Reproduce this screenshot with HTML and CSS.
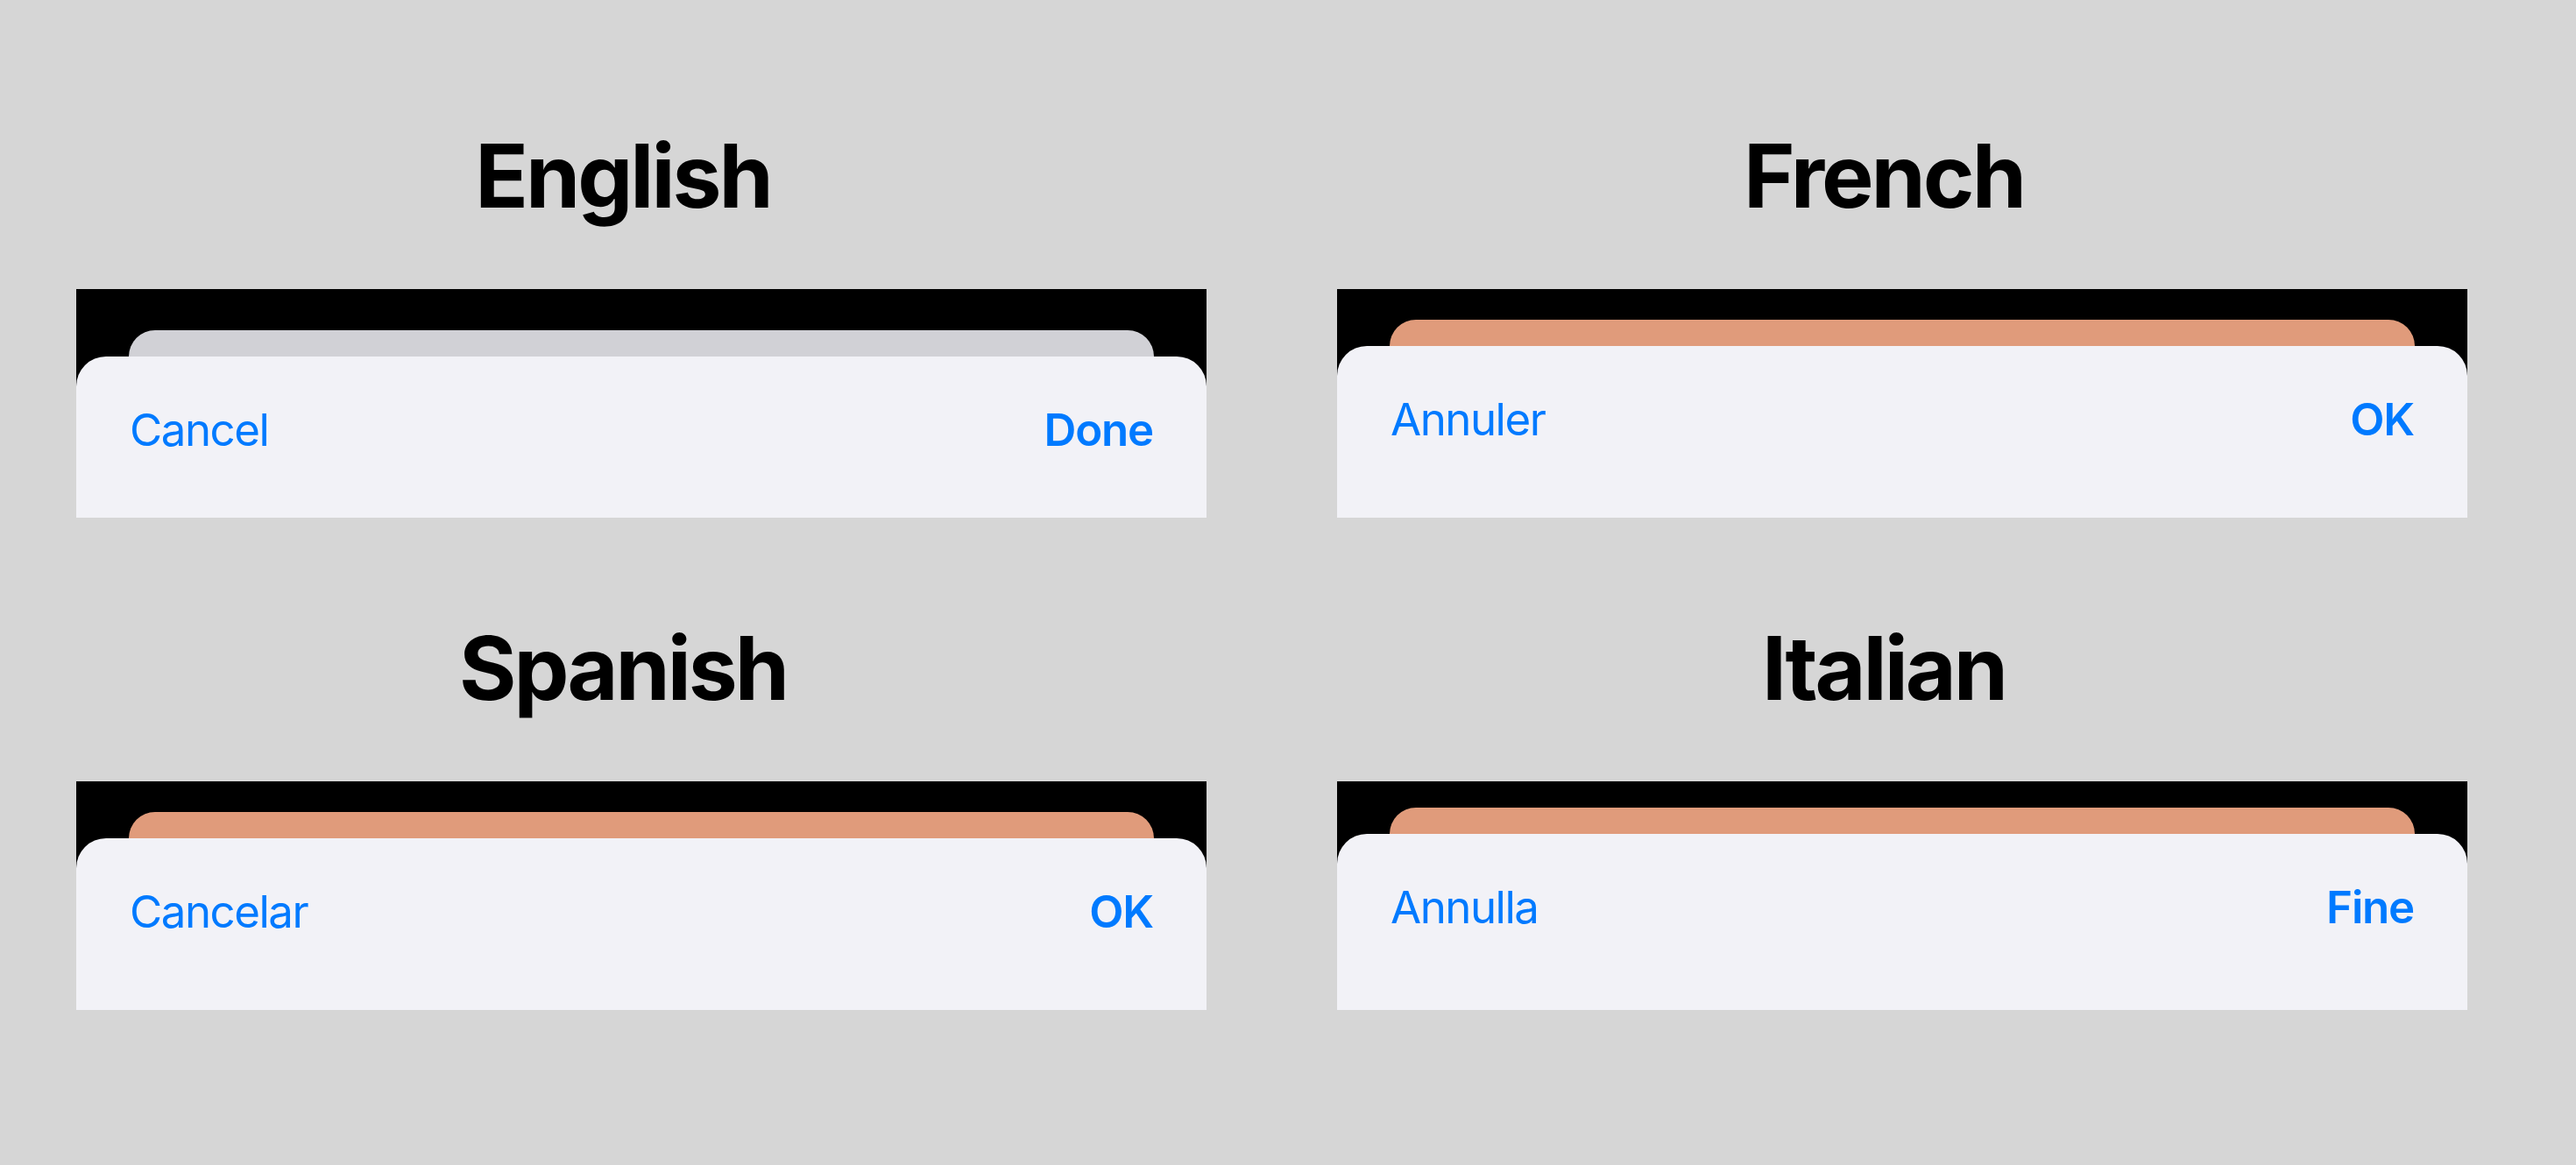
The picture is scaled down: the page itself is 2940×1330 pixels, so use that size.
FILE: index.html
```html
<!DOCTYPE html>
<html lang="en">
<head>
<meta charset="utf-8">
<title>Localized toolbar buttons</title>
<link rel="stylesheet" href="styles.css">
</head>
<body>
<main class="grid">
  <section class="demo">
    <h2 class="demo__title">English</h2>
    <div class="screen">
      <div class="sheet-back sheet-back--grey sheet-back--low"></div>
      <div class="sheet">
        <span class="sheet__btn">Cancel</span>
        <span class="sheet__btn sheet__btn--primary">Done</span>
      </div>
    </div>
  </section>
  <section class="demo">
    <h2 class="demo__title">French</h2>
    <div class="screen">
      <div class="sheet-back"></div>
      <div class="sheet">
        <span class="sheet__btn">Annuler</span>
        <span class="sheet__btn sheet__btn--primary">OK</span>
      </div>
    </div>
  </section>
  <section class="demo">
    <h2 class="demo__title">Spanish</h2>
    <div class="screen">
      <div class="sheet-back"></div>
      <div class="sheet">
        <span class="sheet__btn">Cancelar</span>
        <span class="sheet__btn sheet__btn--primary">OK</span>
      </div>
    </div>
  </section>
  <section class="demo">
    <h2 class="demo__title">Italian</h2>
    <div class="screen">
      <div class="sheet-back sheet-back--high"></div>
      <div class="sheet">
        <span class="sheet__btn">Annulla</span>
        <span class="sheet__btn sheet__btn--primary">Fine</span>
      </div>
    </div>
  </section>
</main>
</body>
</html>
```
FILE: styles.css
```css
html, body {
  margin: 0;
  padding: 0;
  background: #d6d6d6;
}

body {
  font-family: Inter, "Noto Sans", "Liberation Sans", sans-serif;
}

.grid {
  display: grid;
  grid-template-columns: 1290px 1290px;
  column-gap: 149px;
  row-gap: 112px;
  padding: 141px 124px 0 87px;
}

.demo {
  display: flex;
  flex-direction: column;
  gap: 69px;
}

.demo__title {
  margin: 0;
  padding-right: 42px;
  text-align: center;
  font-size: 100px;
  line-height: 120px;
  font-weight: 700;
  color: #000;
  letter-spacing: -3px;
}

.screen {
  height: 261px;
  background: #000;
  display: flex;
  flex-direction: column;
  overflow: hidden;
}

.sheet-back {
  flex: none;
  height: 30px;
  margin: 35px 60px 0;
  background: #e09b7b;
  border-radius: 30px 30px 0 0;
}

.sheet-back--grey {
  background: #d1d1d6;
}

.sheet-back--low {
  margin-top: 47px;
}

.sheet-back--high {
  margin-top: 30px;
}

.sheet {
  flex: 1;
  background: #f2f2f7;
  border-radius: 34px 34px 0 0;
  display: flex;
  justify-content: space-between;
  align-items: flex-start;
  padding: 54px 61px 0 61px;
}

.sheet__btn {
  font-size: 51px;
  line-height: 60px;
  font-weight: 400;
  color: #007aff;
  letter-spacing: -1.5px;
}

.sheet__btn--primary {
  font-weight: 600;
  letter-spacing: -1.2px;
}
```
